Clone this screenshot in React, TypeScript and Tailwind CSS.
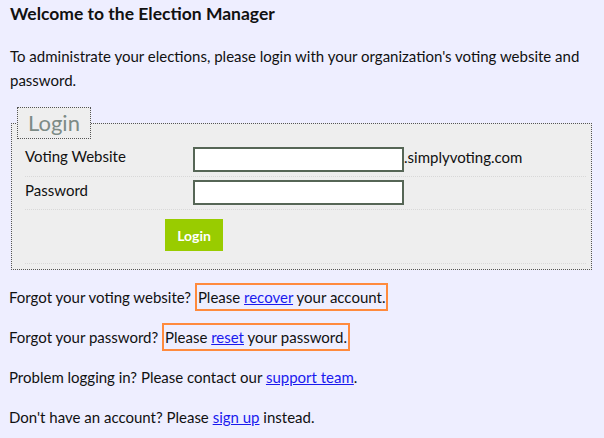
import React from 'react'

function Boxed({ children }: { children: React.ReactNode }) {
  return (
    <span className="border-2 border-[#ff8a3d] px-[1px] py-[3px]">{children}</span>
  )
}

function Link({ children }: { children: React.ReactNode }) {
  return (
    <a href="#" className="text-[#1a1aee] underline">
      {children}
    </a>
  )
}

export default function App() {
  return (
    <div
      className="min-h-screen bg-[#eeeeff] pl-[9px] text-[15px] text-[#111]"
      style={{ fontFamily: 'Lato, "Open Sans", sans-serif' }}
    >
      <h1 className="pt-[2px] pl-[1px] text-[17.5px] font-bold leading-[24px]">
        Welcome to the Election Manager
      </h1>
      <p className="mt-[18px] pl-[1px] pr-[24px] leading-[24px]">
        To administrate your elections, please login with your organization's voting website and
        password.
      </p>

      <fieldset className="mt-[15px] ml-[2px] w-[581px] border border-dotted border-[#555] bg-[#eeeeee] pr-[5px] pl-[5px] pb-[5px]">
        <legend className="border border-dotted border-[#555] bg-[#eeeeee] px-[10px] text-[22px] leading-[30px] text-[#7d8b86]">
          Login
        </legend>
        <div className="pl-[8px]">
          <div className="flex items-start border-b border-dotted border-[#d8d8d8] pt-[8px] pb-[4px]">
            <label className="w-[168px] pt-[0px] leading-[18px]">Voting Website</label>
            <input className="h-[25px] w-[211px] border-2 border-[#566656] bg-white" />
            <span className="pt-[1px] leading-[18px]">.simplyvoting.com</span>
          </div>
          <div className="flex items-start border-b border-dotted border-[#d8d8d8] pt-[3px] pb-[4px]">
            <label className="w-[168px] pt-[1px] leading-[18px]">Password</label>
            <input type="password" className="h-[25px] w-[211px] border-2 border-[#566656] bg-white" />
          </div>
          <div className="border-b border-dotted border-[#d8d8d8] pt-[9px] pb-[12px]">
            <button className="ml-[140px] h-[32px] w-[58px] bg-[#99cc00] text-[14px] font-bold text-white">
              Login
            </button>
          </div>
        </div>
      </fieldset>

      <div className="mt-[15px] flex flex-col gap-[16px] leading-[24px]">
        <p>
          Forgot your voting website? <Boxed>Please <Link>recover</Link> your account.</Boxed>
        </p>
        <p>
          Forgot your password? <Boxed>Please <Link>reset</Link> your password.</Boxed>
        </p>
        <p>
          Problem logging in? Please contact our <Link>support team</Link>.
        </p>
        <p>
          Don't have an account? Please <Link>sign up</Link> instead.
        </p>
      </div>
    </div>
  )
}
